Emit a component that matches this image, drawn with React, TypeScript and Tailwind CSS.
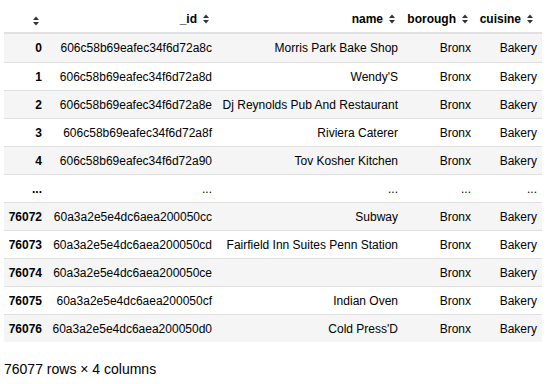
import React from "react";

type Row = {
  idx: string;
  id: string;
  name: string;
  borough: string;
  cuisine: string;
};

const rows: Row[] = [
  { idx: "0", id: "606c58b69eafec34f6d72a8c", name: "Morris Park Bake Shop", borough: "Bronx", cuisine: "Bakery" },
  { idx: "1", id: "606c58b69eafec34f6d72a8d", name: "Wendy'S", borough: "Bronx", cuisine: "Bakery" },
  { idx: "2", id: "606c58b69eafec34f6d72a8e", name: "Dj Reynolds Pub And Restaurant", borough: "Bronx", cuisine: "Bakery" },
  { idx: "3", id: "606c58b69eafec34f6d72a8f", name: "Riviera Caterer", borough: "Bronx", cuisine: "Bakery" },
  { idx: "4", id: "606c58b69eafec34f6d72a90", name: "Tov Kosher Kitchen", borough: "Bronx", cuisine: "Bakery" },
  { idx: "...", id: "...", name: "...", borough: "...", cuisine: "..." },
  { idx: "76072", id: "60a3a2e5e4dc6aea200050cc", name: "Subway", borough: "Bronx", cuisine: "Bakery" },
  { idx: "76073", id: "60a3a2e5e4dc6aea200050cd", name: "Fairfield Inn Suites Penn Station", borough: "Bronx", cuisine: "Bakery" },
  { idx: "76074", id: "60a3a2e5e4dc6aea200050ce", name: "", borough: "Bronx", cuisine: "Bakery" },
  { idx: "76075", id: "60a3a2e5e4dc6aea200050cf", name: "Indian Oven", borough: "Bronx", cuisine: "Bakery" },
  { idx: "76076", id: "60a3a2e5e4dc6aea200050d0", name: "Cold Press'D", borough: "Bronx", cuisine: "Bakery" },
];

const SortIcon = () => (
  <svg width="6" height="10" viewBox="0 0 6 10" className="shrink-0">
    <polygon points="0,4 3,0.5 6,4" fill="#333" />
    <polygon points="0,6 3,9.5 6,6" fill="#333" />
  </svg>
);

const HeadCell = ({ label, w }: { label: string; w: string }) => (
  <div className={`${w} flex items-center justify-end gap-[6px] pr-[9px] pb-[6px]`}>
    {label && <span>{label}</span>}
    <SortIcon />
  </div>
);

function App() {
  return (
    <div
      className="w-[552px] h-[384px] bg-white text-black overflow-hidden"
      style={{ fontFamily: '"Liberation Sans", Arial, sans-serif' }}
    >
      <div className="pl-[4px] w-[542px] text-[12px] leading-[14px]">
        <div className="flex items-end h-[34px] border-b-2 border-[#e0e0e0] font-bold">
          <HeadCell label="" w="w-[44px]" />
          <HeadCell label="_id" w="w-[170px]" />
          <HeadCell label="name" w="w-[186px]" />
          <HeadCell label="borough" w="w-[73px]" />
          <HeadCell label="cuisine" w="w-[65px]" />
        </div>
        {rows.map((r, i) => (
          <div
            key={r.idx + i}
            className={`flex items-center ${i === 0 ? "h-[28px]" : "h-[28px] border-t border-[#e0e0e0]"} ${
              i % 2 === 0 ? "bg-[#f5f5f5]" : "bg-white"
            }`}
          >
            <div className="w-[44px] pr-[6px] text-right font-bold">{r.idx}</div>
            <div className="w-[170px] pr-[6px] text-right">{r.id}</div>
            <div className="w-[186px] pr-[6px] text-right whitespace-nowrap">{r.name}</div>
            <div className="w-[73px] pr-[6px] text-right">{r.borough}</div>
            <div className="w-[65px] pr-[5px] text-right">{r.cuisine}</div>
          </div>
        ))}
      </div>
      <div className="pl-[4px] mt-[19px] text-[14px] leading-[16px]">76077 rows × 4 columns</div>
    </div>
  );
}

export default App;
